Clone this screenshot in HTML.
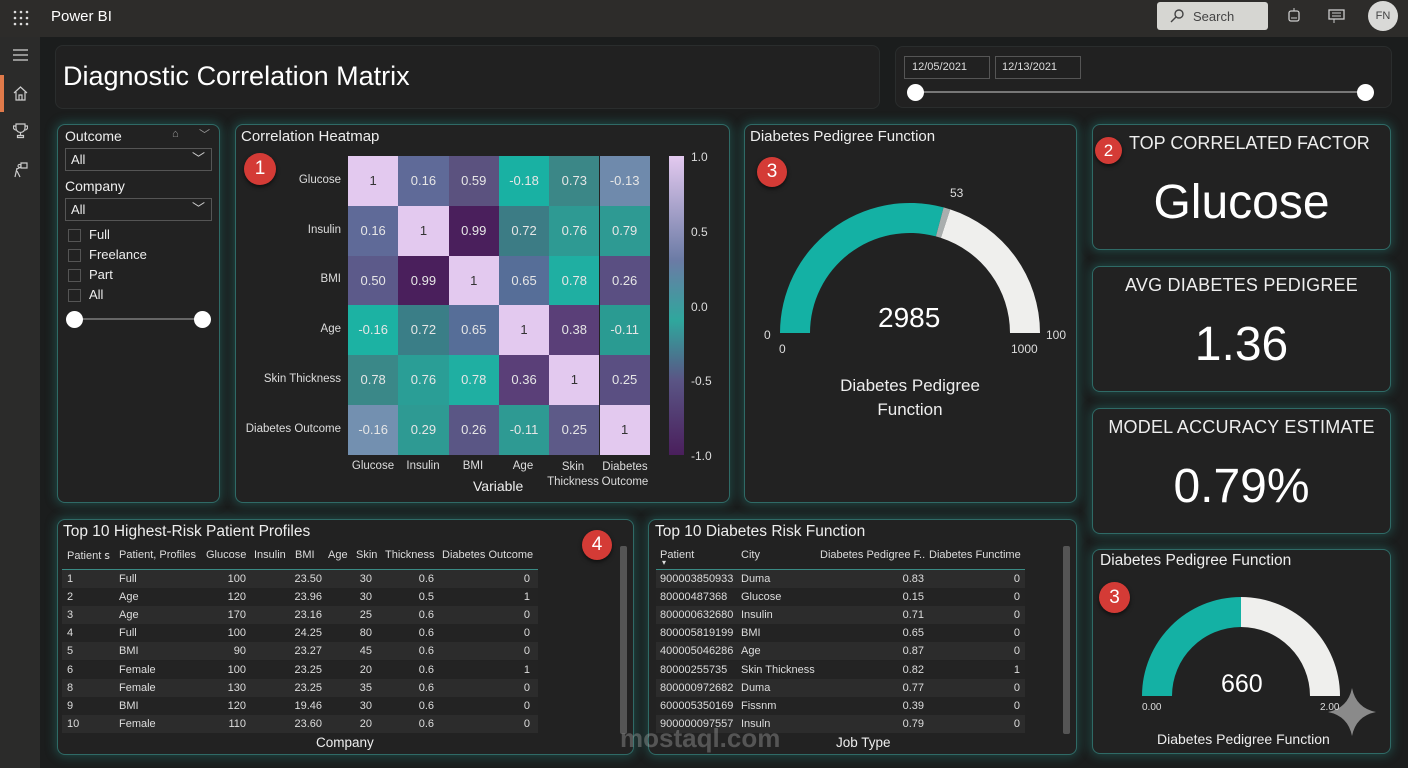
<!DOCTYPE html>
<html><head><meta charset="utf-8"><style>
*{margin:0;padding:0;box-sizing:border-box}
body{width:1408px;height:768px;overflow:hidden;background:#1b1d1d;font-family:"Liberation Sans",sans-serif;color:#eee;position:relative}
.a{position:absolute}
.card{position:absolute;background:#222222;border:1.5px solid #2f6a66;border-radius:8px;box-shadow:0 0 10px 2px rgba(40,150,140,.35)}
.t{position:absolute;white-space:nowrap}
.badge{position:absolute;border-radius:50%;background:#d43b36;color:#fff;text-align:center;font-size:19px;box-shadow:0 2px 4px rgba(0,0,0,.6)}
.cell{position:absolute;width:50.3px;height:49.8px;text-align:center;line-height:49.8px;font-size:13px;color:#e6e6e6}
.row{position:absolute;height:18px;font-size:11px;line-height:18px;color:#ddd}
.row span{position:absolute}
.hd{position:absolute;font-size:11px;color:#ddd;white-space:nowrap}
.kt{position:absolute;left:0;right:0;text-align:center;font-size:19px;color:#eee;letter-spacing:.2px}
.kv{position:absolute;left:0;right:0;text-align:center;color:#fff}
</style></head><body>
<div class="a" style="left:0;top:0;width:1408px;height:37px;background:#2d2c2a"></div>
<svg class="a" style="left:13px;top:10px" width="16" height="16"><g fill="#ddd"><circle cx="2" cy="2" r="1.3"/><circle cx="8" cy="2" r="1.3"/><circle cx="14" cy="2" r="1.3"/><circle cx="2" cy="8" r="1.3"/><circle cx="8" cy="8" r="1.3"/><circle cx="14" cy="8" r="1.3"/><circle cx="2" cy="14" r="1.3"/><circle cx="8" cy="14" r="1.3"/><circle cx="14" cy="14" r="1.3"/></g></svg>
<div class="t" style="left:51px;top:8px;font-size:15px;color:#fff">Power BI</div>
<div class="a" style="left:1157px;top:2px;width:111px;height:28px;background:#d6d6d2;border-radius:3px"></div>
<svg class="a" style="left:1170px;top:9px" width="14" height="14"><circle cx="9" cy="5" r="4" fill="none" stroke="#444" stroke-width="1.4"/><line x1="6" y1="8" x2="1" y2="13" stroke="#444" stroke-width="1.4"/></svg>
<div class="t" style="left:1193px;top:9px;font-size:13px;color:#444">Search</div>
<svg class="a" style="left:1286px;top:7px" width="16" height="18"><rect x="3" y="4" width="10" height="10" rx="2" fill="none" stroke="#ccc" stroke-width="1.3"/><line x1="8" y1="1" x2="8" y2="4" stroke="#ccc"/><line x1="5" y1="11" x2="11" y2="11" stroke="#ccc"/></svg>
<svg class="a" style="left:1328px;top:9px" width="18" height="15"><rect x="1" y="1" width="15" height="9" fill="none" stroke="#ccc" stroke-width="1.3"/><line x1="4" y1="4" x2="13" y2="4" stroke="#ccc"/><line x1="4" y1="7" x2="13" y2="7" stroke="#ccc"/><line x1="6" y1="10" x2="6" y2="14" stroke="#ccc"/></svg>
<div class="a" style="left:1368px;top:1px;width:30px;height:30px;border-radius:50%;background:#d9d9d7;color:#444;font-size:11px;text-align:center;line-height:30px">FN</div>
<div class="a" style="left:0;top:37px;width:40px;height:731px;background:#2b2b2a"></div>
<div class="a" style="left:0;top:75px;width:4px;height:37px;background:#e07a4a"></div>
<svg class="a" style="left:13px;top:49px" width="15" height="12"><g stroke="#ccc" stroke-width="1.3"><line x1="0" y1="1" x2="15" y2="1"/><line x1="0" y1="6" x2="15" y2="6"/><line x1="0" y1="11" x2="15" y2="11"/></g></svg>
<svg class="a" style="left:13px;top:86px" width="15" height="15"><path d="M1 7 L7.5 1 L14 7 M3 6 V14 H12 V6 M6 14 V9 H9 V14" fill="none" stroke="#ccc" stroke-width="1.2"/></svg>
<svg class="a" style="left:13px;top:123px" width="15" height="16"><path d="M3 1 H12 V5 A4.5 4.5 0 0 1 3 5 Z M3 3 H0.5 A2.5 3 0 0 0 3 7 M12 3 H14.5 A2.5 3 0 0 1 12 7 M7.5 9.5 V12 M4.5 14.5 H10.5 V12.5 H4.5 Z" fill="none" stroke="#ccc" stroke-width="1.2"/></svg>
<svg class="a" style="left:13px;top:161px" width="15" height="17"><path d="M8 2 H14 V7 H8 Z M5 5 A1.5 1.5 0 1 0 5 4.9 M4 7 L2 16 M4 10 L7 16 M4 8 L8 6" fill="none" stroke="#ccc" stroke-width="1.2"/></svg>

<div class="card" style="left:55px;top:45px;width:825px;height:64px;border-color:#2a2d2d;box-shadow:none;background:#212121"></div>
<div class="t" style="left:63px;top:61px;font-size:27px;color:#fff">Diagnostic Correlation Matrix</div>
<div class="card" style="left:895px;top:46px;width:497px;height:62px;border-color:#2a2d2d;box-shadow:none;background:#212121"></div>
<div class="a" style="left:904px;top:56px;width:86px;height:23px;border:1px solid #555;font-size:11px;line-height:21px;padding-left:7px;color:#ddd">12/05/2021</div>
<div class="a" style="left:995px;top:56px;width:86px;height:23px;border:1px solid #555;font-size:11px;line-height:21px;padding-left:6px;color:#ddd">12/13/2021</div>
<div class="a" style="left:915px;top:91px;width:450px;height:2px;background:#777"></div>
<div class="a" style="left:907px;top:84px;width:17px;height:17px;border-radius:50%;background:#fff"></div>
<div class="a" style="left:1357px;top:84px;width:17px;height:17px;border-radius:50%;background:#fff"></div>

<div class="card" style="left:57px;top:124px;width:163px;height:379px"></div>
<div class="t" style="left:65px;top:128px;font-size:14px">Outcome</div>
<div class="t" style="left:172px;top:128px;font-size:11px;color:#999">⌂</div>
<div class="t" style="left:199px;top:126px;font-size:11px;color:#999">﹀</div>
<div class="a" style="left:65px;top:148px;width:147px;height:23px;border:1px solid #555;font-size:13px;line-height:21px;padding-left:5px">All<span style="position:absolute;right:6px;top:-1px;color:#ccc">﹀</span></div>
<div class="t" style="left:65px;top:178px;font-size:14px">Company</div>
<div class="a" style="left:65px;top:198px;width:147px;height:23px;border:1px solid #555;font-size:13px;line-height:21px;padding-left:5px">All<span style="position:absolute;right:6px;top:-1px;color:#ccc">﹀</span></div>
<div class="a" style="left:68px;top:229px;width:13px;height:13px;border:1px solid #555"></div><div class="t" style="left:89px;top:227px;font-size:13px">Full</div>
<div class="a" style="left:68px;top:249px;width:13px;height:13px;border:1px solid #555"></div><div class="t" style="left:89px;top:247px;font-size:13px">Freelance</div>
<div class="a" style="left:68px;top:269px;width:13px;height:13px;border:1px solid #555"></div><div class="t" style="left:89px;top:267px;font-size:13px">Part</div>
<div class="a" style="left:68px;top:289px;width:13px;height:13px;border:1px solid #555"></div><div class="t" style="left:89px;top:287px;font-size:13px">All</div>
<div class="a" style="left:74px;top:318px;width:128px;height:2px;background:#666"></div>
<div class="a" style="left:66px;top:311px;width:17px;height:17px;border-radius:50%;background:#fff"></div>
<div class="a" style="left:194px;top:311px;width:17px;height:17px;border-radius:50%;background:#fff"></div>

<div class="card" style="left:235px;top:124px;width:495px;height:379px"></div>
<div class="t" style="left:241px;top:128px;font-size:15px">Correlation Heatmap</div>
<div class="badge" style="left:244px;top:153px;width:32px;height:32px;line-height:32px">1</div>
<div class="t" style="right:1067px;top:174px;font-size:11.5px;color:#ddd">Glucose</div>
<div class="t" style="right:1067px;top:224px;font-size:11.5px;color:#ddd">Insulin</div>
<div class="t" style="right:1067px;top:273px;font-size:11.5px;color:#ddd">BMI</div>
<div class="t" style="right:1067px;top:323px;font-size:11.5px;color:#ddd">Age</div>
<div class="t" style="right:1067px;top:373px;font-size:11.5px;color:#ddd">Skin Thickness</div>
<div class="t" style="right:1067px;top:423px;font-size:11.5px;color:#ddd">Diabetes Outcome</div>
<div class="a" style="left:348px;top:156px">
<div class="cell" style="left:0;top:0;background:#e3c9ef;color:#333">1</div>
<div class="cell" style="left:50.3px;top:0;background:#5f6a98">0.16</div>
<div class="cell" style="left:100.6px;top:0;background:#5b527f">0.59</div>
<div class="cell" style="left:150.9px;top:0;background:#19b1a3">-0.18</div>
<div class="cell" style="left:201.2px;top:0;background:#3b8787">0.73</div>
<div class="cell" style="left:251.5px;top:0;background:#6f8aac">-0.13</div>
<div class="cell" style="left:0;top:49.8px;background:#5f6a98">0.16</div>
<div class="cell" style="left:50.3px;top:49.8px;background:#e3c9ef;color:#333">1</div>
<div class="cell" style="left:100.6px;top:49.8px;background:#4a1f5c">0.99</div>
<div class="cell" style="left:150.9px;top:49.8px;background:#3c7c85">0.72</div>
<div class="cell" style="left:201.2px;top:49.8px;background:#2e9a93">0.76</div>
<div class="cell" style="left:251.5px;top:49.8px;background:#2e9a93">0.79</div>
<div class="cell" style="left:0;top:99.6px;background:#5c5a8a">0.50</div>
<div class="cell" style="left:50.3px;top:99.6px;background:#4a1f5c">0.99</div>
<div class="cell" style="left:100.6px;top:99.6px;background:#e3c9ef;color:#333">1</div>
<div class="cell" style="left:150.9px;top:99.6px;background:#566e98">0.65</div>
<div class="cell" style="left:201.2px;top:99.6px;background:#1fafa2">0.78</div>
<div class="cell" style="left:251.5px;top:99.6px;background:#5a4f82">0.26</div>
<div class="cell" style="left:0;top:149.4px;background:#1cb2a3">-0.16</div>
<div class="cell" style="left:50.3px;top:149.4px;background:#3a7e87">0.72</div>
<div class="cell" style="left:100.6px;top:149.4px;background:#566e98">0.65</div>
<div class="cell" style="left:150.9px;top:149.4px;background:#e3c9ef;color:#333">1</div>
<div class="cell" style="left:201.2px;top:149.4px;background:#5a3f78">0.38</div>
<div class="cell" style="left:251.5px;top:149.4px;background:#2a9b92">-0.11</div>
<div class="cell" style="left:0;top:199.2px;background:#3a8888">0.78</div>
<div class="cell" style="left:50.3px;top:199.2px;background:#2a9e96">0.76</div>
<div class="cell" style="left:100.6px;top:199.2px;background:#1fafa2">0.78</div>
<div class="cell" style="left:150.9px;top:199.2px;background:#5a3f78">0.36</div>
<div class="cell" style="left:201.2px;top:199.2px;background:#e3c9ef;color:#333">1</div>
<div class="cell" style="left:251.5px;top:199.2px;background:#5a4f82">0.25</div>
<div class="cell" style="left:0;top:249px;background:#7390b0">-0.16</div>
<div class="cell" style="left:50.3px;top:249px;background:#2e9a93">0.29</div>
<div class="cell" style="left:100.6px;top:249px;background:#5a5685">0.26</div>
<div class="cell" style="left:150.9px;top:249px;background:#2e9a93">-0.11</div>
<div class="cell" style="left:201.2px;top:249px;background:#5d5a88">0.25</div>
<div class="cell" style="left:251.5px;top:249px;background:#e3c9ef;color:#333">1</div>
</div>
<div class="a" style="left:669px;top:156px;width:15px;height:299px;background:linear-gradient(#e3c9ef,#6b7ba5 35%,#2fa79d 55%,#5a5585 75%,#4a1f5c)"></div>
<div class="t" style="left:691px;top:150px;font-size:12px;color:#ddd">1.0</div>
<div class="t" style="left:691px;top:225px;font-size:12px;color:#ddd">0.5</div>
<div class="t" style="left:691px;top:300px;font-size:12px;color:#ddd">0.0</div>
<div class="t" style="left:691px;top:374px;font-size:12px;color:#ddd">-0.5</div>
<div class="t" style="left:691px;top:449px;font-size:12px;color:#ddd">-1.0</div>
<div class="t" style="left:348px;top:460px;width:302px;font-size:11.5px;color:#ddd">
<span class="a" style="left:0;width:50px;text-align:center">Glucose</span>
<span class="a" style="left:50px;width:50px;text-align:center">Insulin</span>
<span class="a" style="left:100px;width:50px;text-align:center">BMI</span>
<span class="a" style="left:150px;width:50px;text-align:center">Age</span>
<span class="a" style="left:196px;width:58px;text-align:center;line-height:15px">Skin<br>Thickness</span>
<span class="a" style="left:248px;width:58px;text-align:center;line-height:15px">Diabetes<br>Outcome</span>
</div>
<div class="t" style="left:473px;top:478px;font-size:14px">Variable</div>

<div class="card" style="left:744px;top:124px;width:333px;height:379px"></div>
<div class="t" style="left:750px;top:128px;font-size:15px">Diabetes Pedigree Function</div>
<div class="badge" style="left:757px;top:157px;width:30px;height:30px;line-height:30px">3</div>
<div class="card" style="left:1092px;top:124px;width:299px;height:126px"></div>
<div class="badge" style="left:1095px;top:137px;width:27px;height:27px;line-height:27px;font-size:17px">2</div>
<div class="t" style="left:1129px;top:133px;font-size:18px">TOP CORRELATED FACTOR</div>
<div class="kv" style="left:1092px;width:299px;top:175px;font-size:48px">Glucose</div>
<div class="card" style="left:1092px;top:266px;width:299px;height:126px"></div>
<div class="kt" style="left:1092px;width:299px;top:275px;font-size:18px">AVG DIABETES PEDIGREE</div>
<div class="kv" style="left:1092px;width:299px;top:317px;font-size:48px">1.36</div>
<div class="card" style="left:1092px;top:408px;width:299px;height:126px"></div>
<div class="kt" style="left:1092px;width:299px;top:417px;font-size:18px">MODEL ACCURACY ESTIMATE</div>
<div class="kv" style="left:1092px;width:299px;top:459px;font-size:48px">0.79%</div>
<div class="card" style="left:1092px;top:549px;width:299px;height:205px"></div>
<div class="t" style="left:1100px;top:552px;font-size:15.5px">Diabetes Pedigree Function</div>
<div class="badge" style="left:1099px;top:582px;width:31px;height:31px;line-height:31px">3</div>

<svg class="a" style="left:0;top:0" width="1408" height="768">
<path d="M780,333 A130,130 0 0 1 943.6,207.4 L935.9,236.4 A100,100 0 0 0 810,333 Z" fill="#14b1a4"/>
<path d="M943.6,207.4 A130,130 0 0 1 950.2,209.4 L940.9,237.9 A100,100 0 0 0 935.9,236.4 Z" fill="#a9aeae"/>
<path d="M950.2,209.4 A130,130 0 0 1 1040,333 L1010,333 A100,100 0 0 0 940.9,237.9 Z" fill="#efefed"/>
<path d="M1142,696 A99,99 0 0 1 1241,597 L1241,627 A69,69 0 0 0 1172,696 Z" fill="#14b1a4"/>
<path d="M1241,597 A99,99 0 0 1 1340,696 L1310,696 A69,69 0 0 0 1241,627 Z" fill="#efefed"/>
<path d="M1352,688 Q1356,708 1376,712 Q1356,716 1352,736 Q1348,716 1328,712 Q1348,708 1352,688 Z" fill="#8a8a8a"/>
</svg>
<div class="t" style="left:950px;top:186px;font-size:12px;color:#ddd">53</div>
<div class="t" style="left:878px;top:302px;font-size:28px;color:#fff">2985</div>
<div class="t" style="left:764px;top:328px;font-size:12px;color:#ddd">0</div>
<div class="t" style="left:779px;top:342px;font-size:12px;color:#ddd">0</div>
<div class="t" style="left:1046px;top:328px;font-size:12px;color:#ddd">100</div>
<div class="t" style="left:1011px;top:342px;font-size:12px;color:#ddd">1000</div>
<div class="t" style="left:810px;top:374px;width:200px;text-align:center;font-size:17px;line-height:24px">Diabetes Pedigree<br>Function</div>
<div class="t" style="left:1221px;top:670px;font-size:25px;color:#fff">660</div>
<div class="t" style="left:1142px;top:702px;font-size:10px;color:#ddd">0.00</div>
<div class="t" style="left:1320px;top:702px;font-size:10px;color:#ddd">2.00</div>
<div class="t" style="left:1157px;top:731px;font-size:14px">Diabetes Pedigree Function</div>

<div class="card" style="left:57px;top:519px;width:577px;height:236px"></div>
<div class="t" style="left:63px;top:523px;font-size:15.5px">Top 10 Highest-Risk Patient Profiles</div>
<div class="badge" style="left:582px;top:530px;width:30px;height:30px;line-height:30px">4</div>
<div class="a" style="left:620px;top:546px;width:7px;height:188px;background:#555;border-radius:2px"></div>
<div class="hd" style="left:67px;top:549px">Patient ꜱ</div>
<div class="hd" style="left:119px;top:549px">Patient, Profiles</div>
<div class="hd" style="left:206px;top:549px">Glucose</div>
<div class="hd" style="left:254px;top:549px">Insulin</div>
<div class="hd" style="left:295px;top:549px">BMI</div>
<div class="hd" style="left:328px;top:549px">Age</div>
<div class="hd" style="left:356px;top:549px">Skin</div>
<div class="hd" style="left:385px;top:549px">Thickness</div>
<div class="hd" style="left:442px;top:549px">Diabetes Outcome</div>
<div class="a" style="left:62px;top:569px;width:476px;height:1px;background:#3a8a84"></div>
<div class="t" style="left:316px;top:735px;font-size:13.5px">Company</div>

<div class="card" style="left:648px;top:519px;width:429px;height:236px"></div>
<div class="t" style="left:655px;top:523px;font-size:15.5px">Top 10 Diabetes Risk Function</div>
<div class="a" style="left:1063px;top:546px;width:7px;height:188px;background:#555;border-radius:2px"></div>
<div class="hd" style="left:660px;top:549px">Patient</div>
<div class="hd" style="left:662px;top:558px;font-size:8px">▾</div>
<div class="hd" style="left:741px;top:549px">City</div>
<div class="hd" style="left:820px;top:549px">Diabetes Pedigree F..</div>
<div class="hd" style="left:929px;top:549px">Diabetes Functime</div>
<div class="a" style="left:656px;top:569px;width:369px;height:1px;background:#3a8a84"></div>

<div class="row" style="left:62px;top:570px;width:476px;background:#2c2c2c"><span style="left:5px">1</span><span style="left:57px">Full</span><span style="right:292px">100</span><span style="right:216px">23.50</span><span style="right:166px">30</span><span style="right:104px">0.6</span><span style="right:8px">0</span></div>
<div class="row" style="left:62px;top:588px;width:476px;background:#232323"><span style="left:5px">2</span><span style="left:57px">Age</span><span style="right:292px">120</span><span style="right:216px">23.96</span><span style="right:166px">30</span><span style="right:104px">0.5</span><span style="right:8px">1</span></div>
<div class="row" style="left:62px;top:606px;width:476px;background:#2c2c2c"><span style="left:5px">3</span><span style="left:57px">Age</span><span style="right:292px">170</span><span style="right:216px">23.16</span><span style="right:166px">25</span><span style="right:104px">0.6</span><span style="right:8px">0</span></div>
<div class="row" style="left:62px;top:624px;width:476px;background:#232323"><span style="left:5px">4</span><span style="left:57px">Full</span><span style="right:292px">100</span><span style="right:216px">24.25</span><span style="right:166px">80</span><span style="right:104px">0.6</span><span style="right:8px">0</span></div>
<div class="row" style="left:62px;top:642px;width:476px;background:#2c2c2c"><span style="left:5px">5</span><span style="left:57px">BMI</span><span style="right:292px">90</span><span style="right:216px">23.27</span><span style="right:166px">45</span><span style="right:104px">0.6</span><span style="right:8px">0</span></div>
<div class="row" style="left:62px;top:661px;width:476px;background:#232323"><span style="left:5px">6</span><span style="left:57px">Female</span><span style="right:292px">100</span><span style="right:216px">23.25</span><span style="right:166px">20</span><span style="right:104px">0.6</span><span style="right:8px">1</span></div>
<div class="row" style="left:62px;top:679px;width:476px;background:#2c2c2c"><span style="left:5px">8</span><span style="left:57px">Female</span><span style="right:292px">130</span><span style="right:216px">23.25</span><span style="right:166px">35</span><span style="right:104px">0.6</span><span style="right:8px">0</span></div>
<div class="row" style="left:62px;top:697px;width:476px;background:#232323"><span style="left:5px">9</span><span style="left:57px">BMI</span><span style="right:292px">120</span><span style="right:216px">19.46</span><span style="right:166px">30</span><span style="right:104px">0.6</span><span style="right:8px">0</span></div>
<div class="row" style="left:62px;top:715px;width:476px;background:#2c2c2c"><span style="left:5px">10</span><span style="left:57px">Female</span><span style="right:292px">110</span><span style="right:216px">23.60</span><span style="right:166px">20</span><span style="right:104px">0.6</span><span style="right:8px">0</span></div>

<div class="row" style="left:656px;top:570px;width:369px;background:#2c2c2c"><span style="left:4px">900003850933</span><span style="left:85px">Duma</span><span style="right:101px">0.83</span><span style="right:5px">0</span></div>
<div class="row" style="left:656px;top:588px;width:369px;background:#232323"><span style="left:4px">80000487368</span><span style="left:85px">Glucose</span><span style="right:101px">0.15</span><span style="right:5px">0</span></div>
<div class="row" style="left:656px;top:606px;width:369px;background:#2c2c2c"><span style="left:4px">800000632680</span><span style="left:85px">Insulin</span><span style="right:101px">0.71</span><span style="right:5px">0</span></div>
<div class="row" style="left:656px;top:624px;width:369px;background:#232323"><span style="left:4px">800005819199</span><span style="left:85px">BMI</span><span style="right:101px">0.65</span><span style="right:5px">0</span></div>
<div class="row" style="left:656px;top:642px;width:369px;background:#2c2c2c"><span style="left:4px">400005046286</span><span style="left:85px">Age</span><span style="right:101px">0.87</span><span style="right:5px">0</span></div>
<div class="row" style="left:656px;top:661px;width:369px;background:#232323"><span style="left:4px">80000255735</span><span style="left:85px">Skin Thickness</span><span style="right:101px">0.82</span><span style="right:5px">1</span></div>
<div class="row" style="left:656px;top:679px;width:369px;background:#2c2c2c"><span style="left:4px">800000972682</span><span style="left:85px">Duma</span><span style="right:101px">0.77</span><span style="right:5px">0</span></div>
<div class="row" style="left:656px;top:697px;width:369px;background:#232323"><span style="left:4px">600005350169</span><span style="left:85px">Fissnm</span><span style="right:101px">0.39</span><span style="right:5px">0</span></div>
<div class="row" style="left:656px;top:715px;width:369px;background:#2c2c2c"><span style="left:4px">900000097557</span><span style="left:85px">Insuln</span><span style="right:101px">0.79</span><span style="right:5px">0</span></div>
<div class="t" style="left:836px;top:735px;font-size:13.5px">Job Type</div>
<div class="t" style="left:620px;top:723px;font-size:26px;color:rgba(180,180,180,.35);font-weight:bold">mostaql.com</div>
</body></html>
